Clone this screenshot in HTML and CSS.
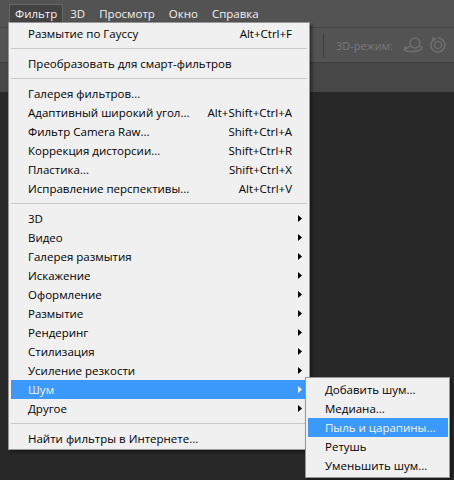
FILE: index.html
```html
<!DOCTYPE html>
<html lang="ru">
<head>
<meta charset="utf-8">
<link rel="stylesheet" href="styles.css">
</head>
<body>
<div class="app">
  <div class="menubar">
    <span class="mb-item active">Фильтр</span>
    <span class="mb-item">3D</span>
    <span class="mb-item">Просмотр</span>
    <span class="mb-item">Окно</span>
    <span class="mb-item">Справка</span>
  </div>
  <div class="optbar">
    <div class="vsep"></div>
    <span class="optlabel">3D-режим:</span>
    <svg class="opticon" width="22" height="18" viewBox="0 0 22 18">
      <circle cx="13" cy="7" r="5" fill="none" stroke="#6e6e6e" stroke-width="1.5"/>
      <path d="M9 10.5 C3 11 1 13 3 14.5 C5 16 14 16 18 14 C21 12.5 20 10.5 17 10" fill="none" stroke="#6e6e6e" stroke-width="1.5"/>
      <path d="M2 10 L6 12.5 L2 15 Z" fill="#6e6e6e"/>
    </svg>
    <svg class="opticon" width="18" height="18" viewBox="0 0 18 18">
      <path d="M5 3.2 A7 7 0 1 0 9 2" fill="none" stroke="#6e6e6e" stroke-width="1.5"/>
      <path d="M2.5 1 L7.5 2 L4.5 6 Z" fill="#6e6e6e"/>
      <circle cx="9" cy="9" r="3.6" fill="none" stroke="#6e6e6e" stroke-width="1.4"/>
    </svg>
  </div>
  <div class="tabbar"></div>
  <div class="canvas"></div>

  <div class="menu main">
    <div class="item"><span class="label">Размытие по Гауссу</span><span class="sc">Alt+Ctrl+F</span><span class="ac"></span></div>
    <div class="sep"></div>
    <div class="item"><span class="label">Преобразовать для смарт-фильтров</span><span class="ac"></span></div>
    <div class="sep"></div>
    <div class="item"><span class="label">Галерея фильтров...</span><span class="ac"></span></div>
    <div class="item"><span class="label">Адаптивный широкий угол...</span><span class="sc">Alt+Shift+Ctrl+A</span><span class="ac"></span></div>
    <div class="item"><span class="label">Фильтр Camera Raw...</span><span class="sc">Shift+Ctrl+A</span><span class="ac"></span></div>
    <div class="item"><span class="label">Коррекция дисторсии...</span><span class="sc">Shift+Ctrl+R</span><span class="ac"></span></div>
    <div class="item"><span class="label">Пластика...</span><span class="sc">Shift+Ctrl+X</span><span class="ac"></span></div>
    <div class="item"><span class="label">Исправление перспективы...</span><span class="sc">Alt+Ctrl+V</span><span class="ac"></span></div>
    <div class="sep"></div>
    <div class="item"><span class="label">3D</span><span class="ac"><i class="arr"></i></span></div>
    <div class="item"><span class="label">Видео</span><span class="ac"><i class="arr"></i></span></div>
    <div class="item"><span class="label">Галерея размытия</span><span class="ac"><i class="arr"></i></span></div>
    <div class="item"><span class="label">Искажение</span><span class="ac"><i class="arr"></i></span></div>
    <div class="item"><span class="label">Оформление</span><span class="ac"><i class="arr"></i></span></div>
    <div class="item"><span class="label">Размытие</span><span class="ac"><i class="arr"></i></span></div>
    <div class="item"><span class="label">Рендеринг</span><span class="ac"><i class="arr"></i></span></div>
    <div class="item"><span class="label">Стилизация</span><span class="ac"><i class="arr"></i></span></div>
    <div class="item"><span class="label">Усиление резкости</span><span class="ac"><i class="arr"></i></span></div>
    <div class="item hl"><span class="label">Шум</span><span class="ac"><i class="arr"></i></span></div>
    <div class="item"><span class="label">Другое</span><span class="ac"><i class="arr"></i></span></div>
    <div class="sep"></div>
    <div class="item"><span class="label">Найти фильтры в Интернете...</span><span class="ac"></span></div>
  </div>

  <div class="menu sub">
    <div class="item"><span class="label">Добавить шум...</span></div>
    <div class="item"><span class="label">Медиана...</span></div>
    <div class="item hl"><span class="label">Пыль и царапины...</span></div>
    <div class="item"><span class="label">Ретушь</span></div>
    <div class="item"><span class="label">Уменьшить шум...</span></div>
  </div>
</div>
</body>
</html>
```
FILE: styles.css
```css
* { box-sizing: border-box; }
body {
  margin: 0;
  background: #282828;
  font-family: "Open Sans", "Noto Sans", sans-serif;
}
.app {
  position: relative;
  width: 454px;
  height: 480px;
  overflow: hidden;
  display: flex;
  flex-direction: column;
}
.menubar {
  height: 28px;
  flex: none;
  background: #535353;
  border-bottom: 1px solid #434343;
  display: flex;
  align-items: flex-start;
  padding-left: 9px;
}
.mb-item {
  margin-top: 4px;
  height: 18px;
  line-height: 17px;
  padding: 0 6px;
  color: #f2f2f2;
  font-size: 11.5px;
  border: 1px solid transparent;
  border-bottom: 0;
  white-space: nowrap;
}
.mb-item.active {
  background: #434343;
  border-color: #666666;
  padding: 0 5px;
}
.optbar {
  height: 35px;
  flex: none;
  background: #535353;
  border-bottom: 1px solid #3e3e3e;
  display: flex;
  align-items: center;
  padding-left: 323px;
}
.vsep {
  width: 1px;
  height: 23px;
  background: #3c3c3c;
  margin-right: 12px;
}
.optlabel {
  font-size: 11px;
  color: #7a7a7a;
  margin-right: 9px;
  white-space: nowrap;
}
.opticon { flex: none; margin-right: 5px; }
.tabbar {
  height: 29px;
  flex: none;
  background: #474747;
}
.canvas {
  flex: 1;
  background: #282828;
}
.menu {
  position: absolute;
  background: #f0f0f0;
  border: 1px solid #979797;
  box-shadow: 2px 2px 3px rgba(0, 0, 0, 0.45);
  font-size: 11.5px;
  color: #000;
}
.menu.main {
  left: 8px;
  top: 22px;
  width: 302px;
  padding: 1px 2px;
}
.menu.sub {
  left: 305px;
  top: 377px;
  width: 145px;
  padding: 2px 1px 2px 2px;
}
.item {
  display: flex;
  align-items: center;
  height: 19px;
  padding-left: 17px;
  white-space: nowrap;
}
.item .label { flex: 1; }
.item .ac {
  width: 15px;
  flex: none;
  display: flex;
  align-items: center;
}
.arr {
  display: block;
  width: 4px;
  height: 7px;
  margin-left: 6px;
  background: #000;
  clip-path: polygon(0 0, 100% 50%, 0 100%);
}
.item.hl {
  background: #3b99fc;
  color: #f4f4f4;
}
.item.hl .arr { background: #f4f4f4; }
.sep {
  height: 1px;
  background: #c9c9c9;
  margin: 5px 0;
}
```
